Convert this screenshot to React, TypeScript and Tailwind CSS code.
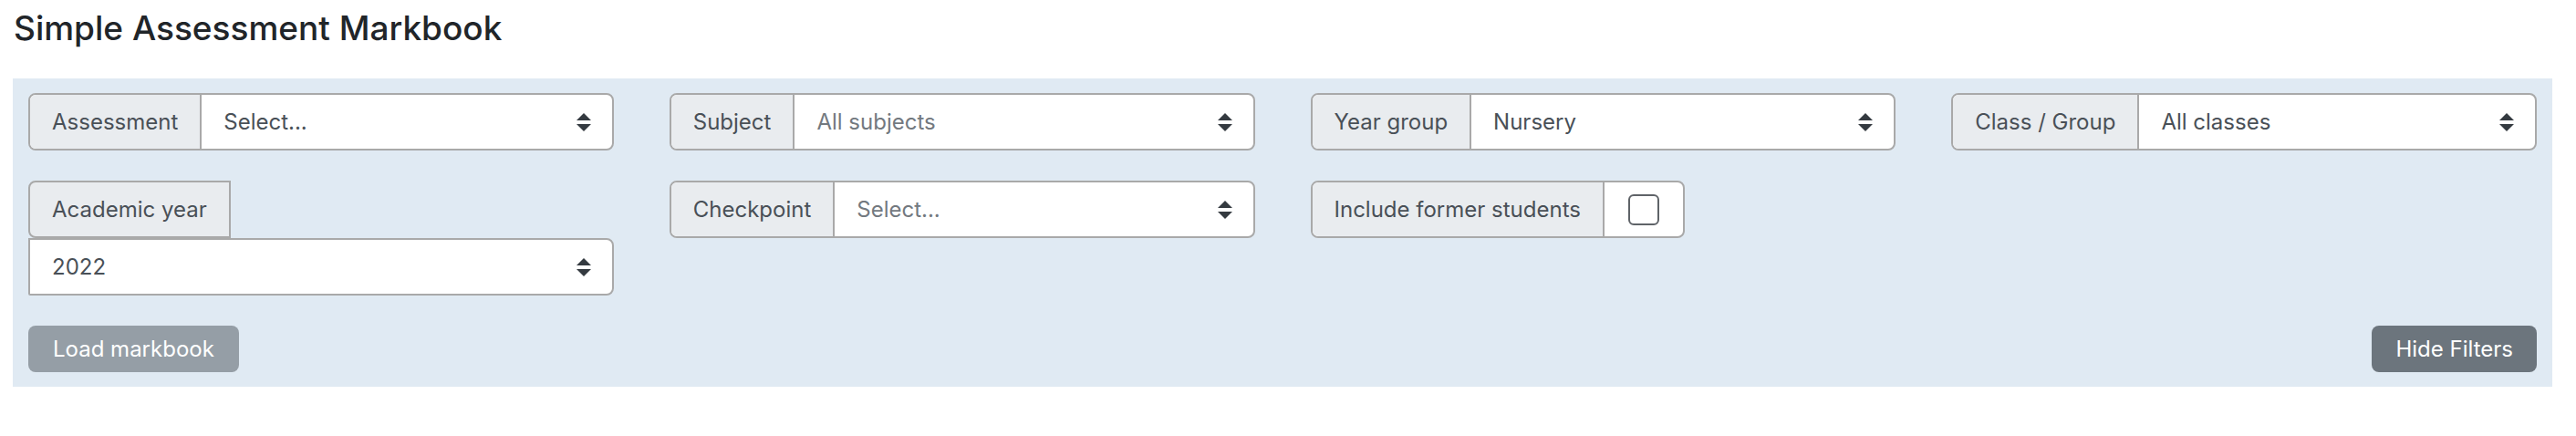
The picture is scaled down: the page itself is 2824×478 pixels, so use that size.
import React from 'react';

const font = { fontFamily: 'Inter, "Noto Sans", sans-serif' };

const SelectArrow = () => (
  <svg viewBox="0 0 4 5" className="h-[20px] w-[16px] shrink-0" fill="#343a40">
    <path d="M2 0L0 2h4zm0 5L0 3h4z" />
  </svg>
);

interface FieldProps {
  label: string;
  value: string;
  muted?: boolean;
}

// Bootstrap-style input group: grey addon + custom select
const SelectField: React.FC<FieldProps> = ({ label, value, muted = false }) => (
  <div className="flex h-[63px] rounded-[8px] border-2 border-[#a9a9a9] bg-white overflow-hidden">
    <div className="flex items-center bg-[#e9ecef] px-[24px] text-[24px] text-[#495057] border-r-2 border-[#a9a9a9] whitespace-nowrap">
      {label}
    </div>
    <div className="flex flex-1 items-center justify-between pl-[24px] pr-[23px] text-[24px]">
      <span className={muted ? 'text-[#73797f]' : 'text-[#495057]'}>{value}</span>
      <SelectArrow />
    </div>
  </div>
);

export default function App() {
  return (
    <div className="min-h-[478px] bg-white pl-[14px] pr-[26px] pt-[8px]" style={font}>
      <h4 className="h-[46px] text-[37px] leading-[46px] font-medium text-[#212529] pl-[1px]">
        Simple Assessment Markbook
      </h4>

      <div className="mt-[32px] bg-[#e0eaf3] px-[17px] pt-[16px] pb-[16px]">
        <div className="grid grid-cols-4 gap-x-[61px] gap-y-[33px]">
          <SelectField label="Assessment" value="Select..." />
          <SelectField label="Subject" value="All subjects" muted />
          <SelectField label="Year group" value="Nursery" />
          <SelectField label="Class / Group" value="All classes" />

          {/* Academic year wraps onto two lines */}
          <div className="flex flex-col">
            <div className="flex h-[63px] w-fit items-center rounded-l-[8px] border-2 border-[#a9a9a9] bg-[#e9ecef] px-[24px] text-[24px] text-[#495057]">
              Academic year
            </div>
            <div className="flex h-[63px] items-center justify-between rounded-r-[8px] rounded-bl-[2px] border-2 border-[#a9a9a9] bg-white pl-[24px] pr-[23px] text-[24px] text-[#495057]">
              <span>2022</span>
              <SelectArrow />
            </div>
          </div>

          <div>
            <SelectField label="Checkpoint" value="Select..." muted />
          </div>

          <div>
            <div className="flex h-[63px] w-fit rounded-[8px] border-2 border-[#a9a9a9] bg-white overflow-hidden">
              <div className="flex items-center bg-[#e9ecef] px-[24px] text-[24px] text-[#495057] border-r-2 border-[#a9a9a9] whitespace-nowrap">
                Include former students
              </div>
              <div className="flex w-[86px] items-center justify-center">
                <div className="h-[34px] w-[34px] rounded-[6px] border-2 border-[#5f6368] bg-white" />
              </div>
            </div>
          </div>
          <div />
        </div>

        <div className="mt-[33px] flex items-center justify-between">
          <button className="h-[51px] rounded-[8px] bg-[#959ea6] px-[27px] text-[24px] text-white">
            Load markbook
          </button>
          <button className="h-[51px] rounded-[8px] bg-[#6c757d] px-[26px] text-[24px] text-white">
            Hide Filters
          </button>
        </div>
      </div>
    </div>
  );
}
